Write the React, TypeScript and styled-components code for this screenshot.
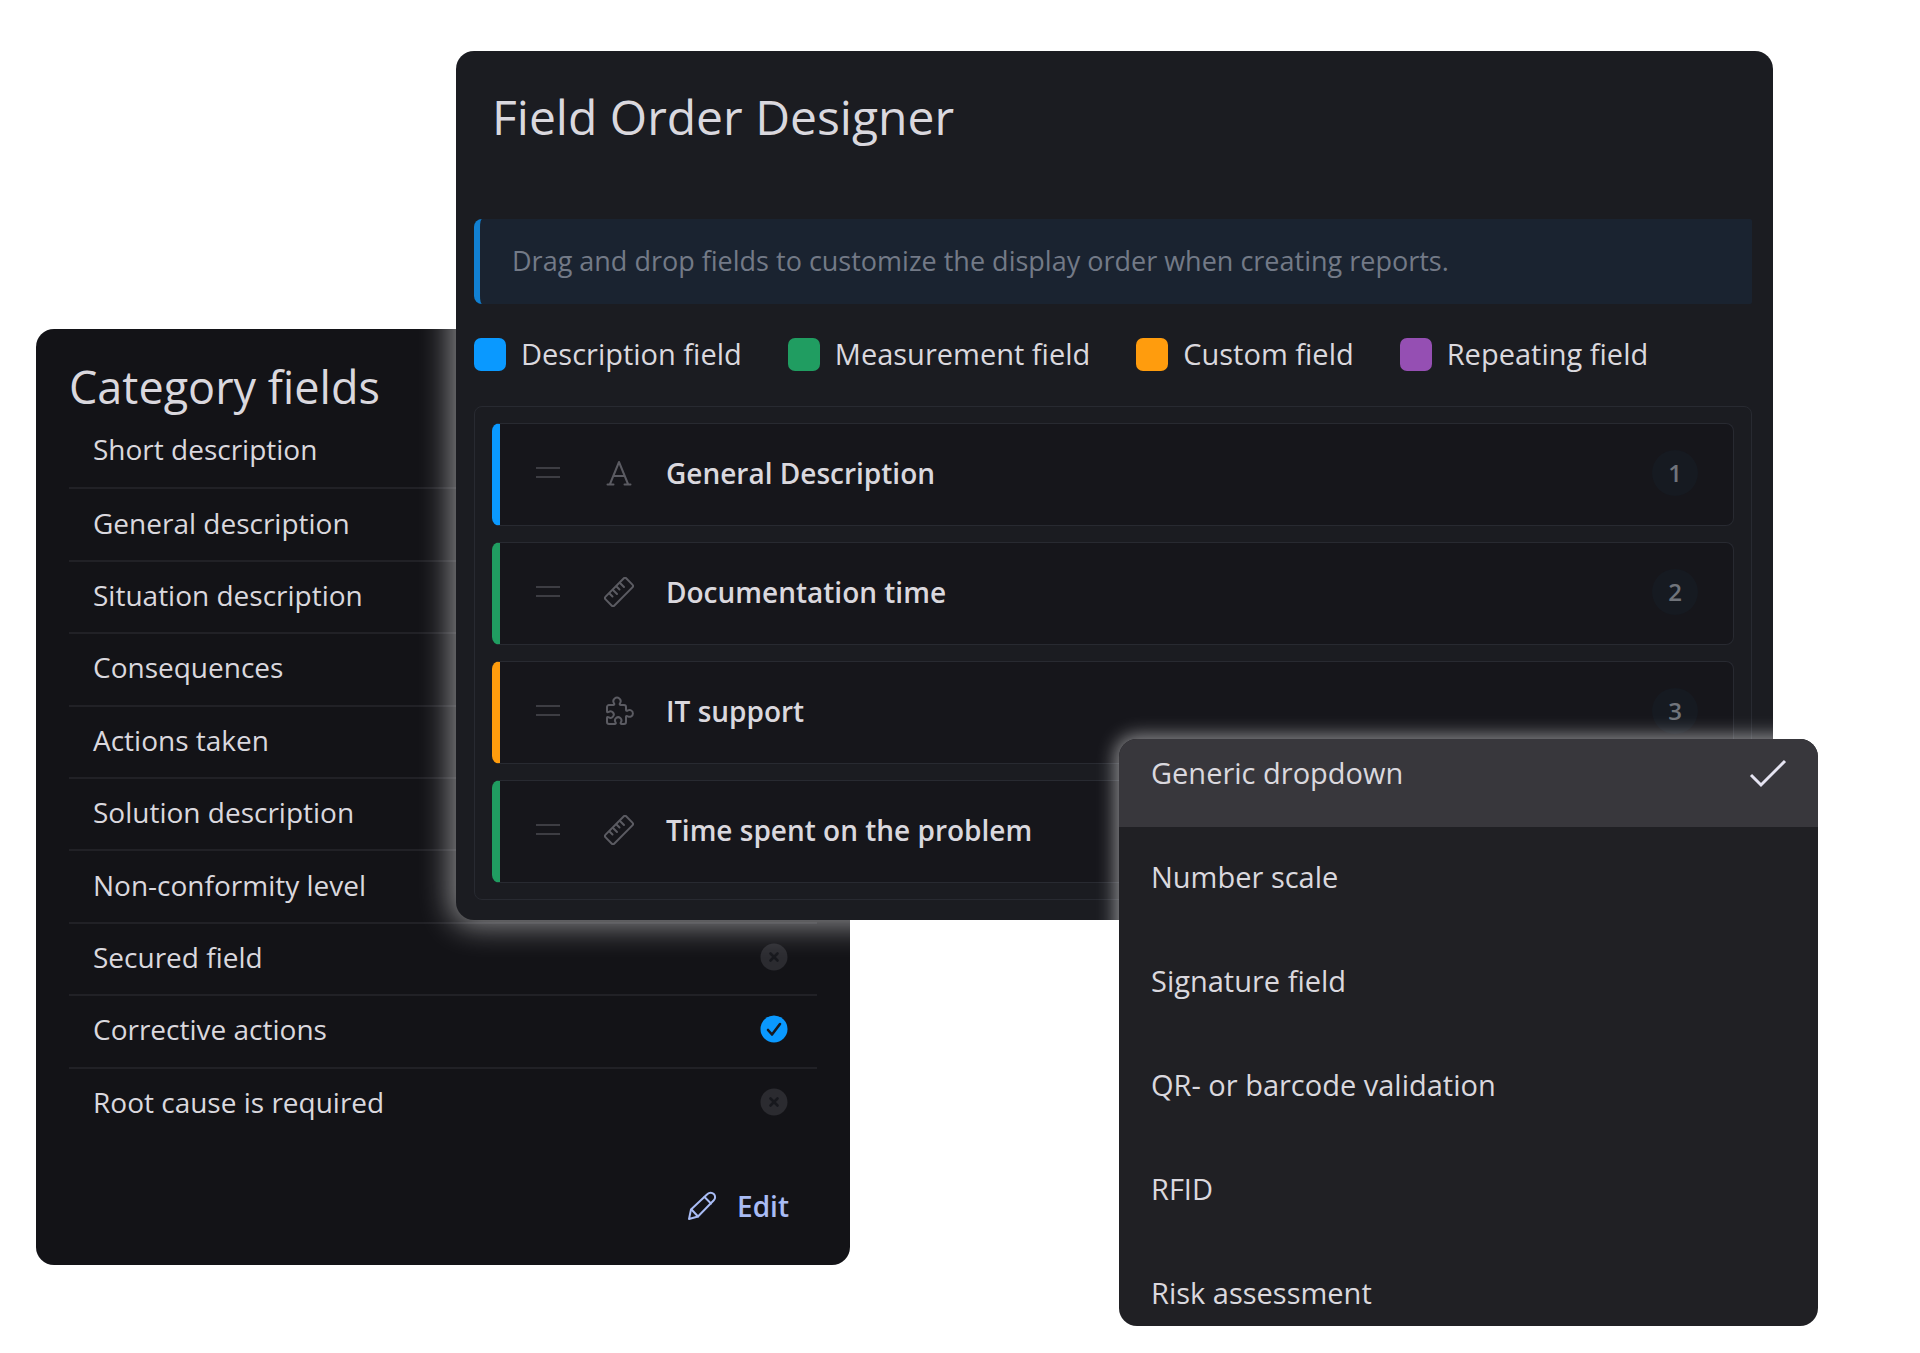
import React, { useState } from "react";
import styled, { createGlobalStyle, css } from "styled-components";

const color = {
  blue: "#0a99ff",
  green: "#209d61",
  orange: "#ff9c0d",
  purple: "#954fb3",
  text: "#dad8de",
  muted: "#737a87",
  line: "#282a31",
};

const GlobalStyle = createGlobalStyle`
  *, *::before, *::after { box-sizing: border-box; }
  body {
    margin: 0;
    background: #ffffff;
    color: ${color.text};
    font-family: "Open Sans", "Noto Sans", sans-serif;
    font-size: 28px;
    line-height: 40px;
  }
  h1, h2, p, ul, ol { margin: 0; padding: 0; font-weight: 400; }
  ul, ol { list-style: none; }
  button { border: 0; padding: 0; background: none; color: inherit; font: inherit; cursor: pointer; }
`;

/* Three overlapping panels share one grid row; the columns mark their edges. */
const Stage = styled.main`
  display: grid;
  grid-template-columns:
    minmax(0, 36fr) minmax(0, 420fr) minmax(0, 394fr) minmax(0, 269fr)
    minmax(0, 654fr) minmax(0, 45fr) minmax(0, 102fr);
  align-items: start;
  padding-bottom: 27px;
`;

const Panel = styled.section`
  grid-row: 1;
  border-radius: 18px;
  overflow: hidden;
`;

const CategoryPanel = styled(Panel)`
  grid-column: 2 / 4;
  margin-top: 329px;
  padding: 30px 33px 39px;
  background: #131317;
`;

const DesignerPanel = styled(Panel)`
  grid-column: 3 / 6;
  margin-top: 51px;
  padding: 34px 21px 20px 18px;
  background: #1b1c21;
  box-shadow: 0 0 30px 6px rgba(255, 255, 255, 0.5);
`;

const DropdownPanel = styled(Panel)`
  grid-column: 5 / 7;
  margin-top: 739px;
  background: #202024;
  box-shadow: 0 0 18px 4px rgba(255, 255, 255, 0.5);
`;

const CategoryTitle = styled.h2`
  font-size: 45px;
  line-height: 56px;
`;

const CategoryList = styled.ul`
  display: grid;
  grid-auto-rows: 1fr;
  min-height: 724px;
`;

const CategoryRow = styled.li`
  display: flex;
  align-items: center;
  justify-content: space-between;
  padding: 0 29px 4px 24px;
  & + & { border-top: 2px solid #212126; }
`;

const StatusIcon = styled.svg`
  width: 28px;
  height: 28px;
`;

const Actions = styled.div`
  display: flex;
  justify-content: flex-end;
  margin-top: 47px;
  padding-right: 28px;
`;

const EditButton = styled.button`
  && {
    display: flex;
    align-items: center;
    gap: 20px;
    color: #a9bcf5;
    font-weight: 600;
  }
`;

const LineIcon = styled.svg`
  width: 30px;
  height: 30px;
  fill: none;
  stroke: currentColor;
  stroke-width: 2;
  stroke-linecap: round;
  stroke-linejoin: round;
`;

const DesignerTitle = styled.h1`
  margin: 0 18px 70px;
  font-size: 48px;
  line-height: 64px;
`;

const Banner = styled.p`
  padding: 22px 32px 23px;
  border-left: 6px solid #1180d2;
  border-radius: 8px 2px 2px 8px;
  background: #1a2330;
  color: ${color.muted};
  font-size: 27px;
`;

const Legend = styled.ul`
  display: flex;
  flex-wrap: wrap;
  gap: 16px 46px;
  margin: 30px 0 32px;
  font-size: 29px;
`;

const LegendItem = styled.li`
  display: flex;
  align-items: center;
  gap: 15px;
`;

const Swatch = styled.span<{ $tone: string }>`
  width: 32px;
  height: 33px;
  border-radius: 7px;
  background: ${(p) => p.$tone};
`;

const FieldList = styled.ol`
  display: grid;
  gap: 16px;
  padding: 16px 17px;
  border: 1px solid ${color.line};
  border-radius: 8px;
`;

const FieldCard = styled.li<{ $tone: string }>`
  display: flex;
  align-items: center;
  min-height: 103px;
  padding: 0 35px 4px 36px;
  border: 1px solid ${color.line};
  border-left: 8px solid ${(p) => p.$tone};
  border-radius: 8px;
  background: #16161b;
`;

const Handle = styled.button`
  && {
    display: grid;
    gap: 7px;
    width: 24px;
    margin-right: 44px;
    cursor: grab;
  }
`;

const HandleBar = styled.span`
  height: 2px;
  background: #3d3d43;
`;

const KindIcon = styled.span`
  display: grid;
  place-items: center;
  width: 30px;
  height: 30px;
  margin-right: 32px;
  color: #5b5b62;
`;

const FieldName = styled.span`
  flex: 1;
  font-weight: 600;
`;

const OrderBadge = styled.span`
  display: grid;
  place-items: center;
  width: 46px;
  height: 46px;
  border-radius: 50%;
  background: #161a21;
  color: #70747b;
  font-size: 24px;
  font-weight: 600;
`;

const OptionList = styled.ul`
  margin: -16px 0 -21px;
`;

const Option = styled.button<{ $selected: boolean }>`
  && {
    display: flex;
    align-items: center;
    justify-content: space-between;
    width: 100%;
    height: 104px;
    padding: 0 31px 4px 32px;
    font-size: 29px;
    text-align: left;
    ${(p) =>
      p.$selected &&
      css`
        background: #38373c;
      `}
  }
`;

const CheckIcon = styled.svg`
  width: 38px;
  height: 30px;
  fill: none;
  stroke: #e6e4f2;
  stroke-width: 3;
`;

function Status({ on }: { on: boolean }) {
  return (
    <StatusIcon viewBox="0 0 28 28" role="img" aria-label={on ? "Enabled" : "Disabled"}>
      <circle cx="14" cy="14" r="13.5" fill={on ? color.blue : "#2b2b30"} />
      <path
        d={on ? "M8 15l4 4.5L20 9" : "M10.5 10.500l7 7M17.500 10.500l-7 7"}
        fill="none"
        stroke="#17181d"
        strokeWidth="2.6"
        strokeLinecap="round"
        strokeLinejoin="round"
      />
    </StatusIcon>
  );
}

function PencilIcon() {
  return (
    <LineIcon viewBox="0 0 30 30" aria-hidden="true">
      <path d="M2 28l2-9.500L20.500 3a4.400 4.400 0 0 1 6.300 6.300L11 25.500z" />
      <path d="M4.500 18.500l6.500 7M17.500 6l6.500 6.500" />
    </LineIcon>
  );
}

/* Serif letter symbol of the text fields. */
function TypefaceIcon() {
  return (
    <LineIcon viewBox="0 0 30 30" aria-hidden="true">
      <path d="M6 26L15 4l9 22M9.500 18h11M3.500 26.500h6M20.500 26.500h6" />
    </LineIcon>
  );
}

function RulerIcon() {
  return (
    <LineIcon viewBox="0 0 30 30" aria-hidden="true">
      <path d="M19.600 1.500a2 2 0 0 1 2.800 0l6 6.100a2 2 0 0 1 0 2.800L10.400 28.500a2 2 0 0 1-2.800 0L1.600 22.400a2 2 0 0 1 0-2.800z" />
      <path d="M5.500 16.500l3 3M9 13l4 4M12.500 9.500l3 3M16 6l4 4" />
    </LineIcon>
  );
}

function PuzzleIcon() {
  return (
    <LineIcon viewBox="0 0 30 30" aria-hidden="true">
      <path d="M5 9h4.500c1 0 1-1 .4-1.900a3.600 3.600 0 1 1 6.200 0c-.6.9-.6 1.900.4 1.900H20a2 2 0 0 1 2 2v3c0 1 1 1 1.900.4a3.400 3.400 0 1 1 0 6c-.9-.6-1.900-.6-1.900.4V26a2 2 0 0 1-2 2h-2.600c-1 0-1-1-.5-1.800a3.200 3.200 0 1 0-5.400 0c.5.8.5 1.800-.5 1.800H5a2 2 0 0 1-2-2v-4.200c0-1 1-1 1.800-.5a3.200 3.200 0 1 0 0-5.400c-.8.5-1.800.5-1.800-.5V11a2 2 0 0 1 2-2z" />
    </LineIcon>
  );
}

const categories: { name: string; on: boolean }[] = [
  { name: "Short description", on: true },
  { name: "General description", on: true },
  { name: "Situation description", on: true },
  { name: "Consequences", on: true },
  { name: "Actions taken", on: true },
  { name: "Solution description", on: true },
  { name: "Non-conformity level", on: true },
  { name: "Secured field", on: false },
  { name: "Corrective actions", on: true },
  { name: "Root cause is required", on: false },
];

const legend = [
  { label: "Description field", tone: color.blue },
  { label: "Measurement field", tone: color.green },
  { label: "Custom field", tone: color.orange },
  { label: "Repeating field", tone: color.purple },
];

const fields = [
  { name: "General Description", tone: color.blue, icon: <TypefaceIcon /> },
  { name: "Documentation time", tone: color.green, icon: <RulerIcon /> },
  { name: "IT support", tone: color.orange, icon: <PuzzleIcon /> },
  { name: "Time spent on the problem", tone: color.green, icon: <RulerIcon /> },
];

const options = [
  "Generic dropdown",
  "Number scale",
  "Signature field",
  "QR- or barcode validation",
  "RFID",
  "Risk assessment",
];

export default function App() {
  const [selected, setSelected] = useState(options[0]);

  return (
    <>
      <GlobalStyle />
      <Stage>
        <CategoryPanel>
          <CategoryTitle>Category fields</CategoryTitle>
          <CategoryList>
            {categories.map((c) => (
              <CategoryRow key={c.name}>
                {c.name}
                <Status on={c.on} />
              </CategoryRow>
            ))}
          </CategoryList>
          <Actions>
            <EditButton type="button">
              <PencilIcon />
              Edit
            </EditButton>
          </Actions>
        </CategoryPanel>

        <DesignerPanel>
          <DesignerTitle>Field Order Designer</DesignerTitle>
          <Banner>
            Drag and drop fields to customize the display order when creating reports.
          </Banner>
          <Legend>
            {legend.map((l) => (
              <LegendItem key={l.label}>
                <Swatch $tone={l.tone} />
                {l.label}
              </LegendItem>
            ))}
          </Legend>
          <FieldList>
            {fields.map((f, i) => (
              <FieldCard key={f.name} $tone={f.tone}>
                <Handle type="button" aria-label={`Move ${f.name}`}>
                  <HandleBar />
                  <HandleBar />
                </Handle>
                <KindIcon>{f.icon}</KindIcon>
                <FieldName>{f.name}</FieldName>
                <OrderBadge>{i + 1}</OrderBadge>
              </FieldCard>
            ))}
          </FieldList>
        </DesignerPanel>

        <DropdownPanel>
          <OptionList role="listbox" aria-label="Field type">
            {options.map((o) => (
              <li key={o} role="presentation">
                <Option
                  type="button"
                  role="option"
                  aria-selected={o === selected}
                  $selected={o === selected}
                  onClick={() => setSelected(o)}
                >
                  {o}
                  {o === selected && (
                    <CheckIcon viewBox="0 0 38 30" aria-hidden="true">
                      <path d="M2 17l10 10L36 3" />
                    </CheckIcon>
                  )}
                </Option>
              </li>
            ))}
          </OptionList>
        </DropdownPanel>
      </Stage>
    </>
  );
}
